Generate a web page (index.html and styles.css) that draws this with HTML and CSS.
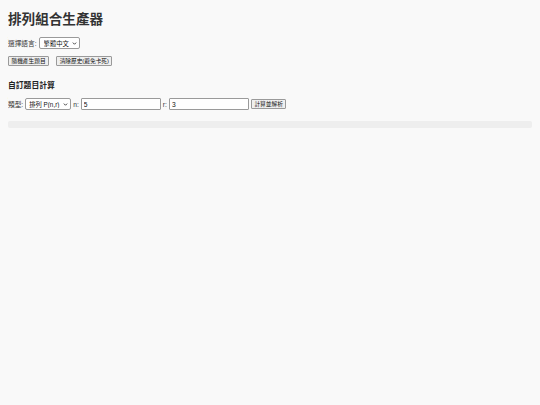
FILE: index.html
```html
<!DOCTYPE html>
<html lang="zh-Hant">
<head>
<meta charset="utf-8">
<title>排列組合生產器</title>
<link rel="stylesheet" href="styles.css">
</head>
<body>
<h1 class="title">排列組合生產器</h1>
<div class="row lang-row">
  <label class="label" for="lang">選擇語言:</label>
  <span class="select-wrap">
    <select id="lang" class="select lang-select">
      <option>繁體中文</option>
      <option>English</option>
    </select>
    <svg class="chev" viewBox="0 0 6 4" width="5" height="3"><path d="M0.8 0.8 L3 3 L5.2 0.8" fill="none" stroke="#222" stroke-width="1.1"/></svg>
  </span>
</div>
<div class="row btn-row">
  <button class="btn">隨機產生題目</button>
  <button class="btn">清除歷史(避免卡死)</button>
</div>
<h3 class="subtitle">自訂題目計算</h3>
<div class="row calc-row">
  <label class="label">類型:</label>
  <span class="select-wrap">
    <select class="select type-select">
      <option>排列 P(n,r)</option>
      <option>組合 C(n,r)</option>
    </select>
    <svg class="chev" viewBox="0 0 6 4" width="5" height="3"><path d="M0.8 0.8 L3 3 L5.2 0.8" fill="none" stroke="#222" stroke-width="1.1"/></svg>
  </span>
  <label class="label">n:</label>
  <input class="num" type="text" value="5">
  <label class="label">r:</label>
  <input class="num" type="text" value="3">
  <button class="btn calc-btn">計算並解析</button>
</div>
<div class="result"></div>
</body>
</html>
```

FILE: styles.css
```css
html {
  background: #f9f9f9;
}
body {
  margin: 8px;
  font-family: "Liberation Sans", "Noto Sans CJK TC", sans-serif;
  color: #333;
  font-size: 6.7px;
}
.title {
  margin: 4px 0 0;
  font-size: 13.6px;
  line-height: 16px;
  font-weight: bold;
  color: #333;
}
.row {
  display: flex;
  align-items: center;
}
.lang-row {
  margin-top: 9px;
  height: 12px;
  gap: 2px;
}
.label {
  font-size: 6.7px;
  color: #333;
}
.select-wrap {
  position: relative;
  display: inline-flex;
}
.select {
  appearance: none;
  -webkit-appearance: none;
  margin: 0;
  height: 12px;
  padding: 0 0 0 4px;
  border: 1px solid #9a9a9a;
  border-radius: 2px;
  background: #fff;
  font-family: "Liberation Sans", "Noto Sans CJK TC", sans-serif;
  font-size: 6.3px;
  color: #111;
}
.lang-select {
  width: 41px;
}
.type-select {
  width: 46px;
  padding-left: 3px;
}
.chev {
  position: absolute;
  right: 3px;
  top: 5px;
}
.btn-row {
  margin-top: 7px;
  height: 10px;
  gap: 7px;
}
.btn {
  margin: 0;
  height: 10px;
  padding: 0 2.5px;
  border: 1px solid #9a9a9a;
  border-radius: 1px;
  background: #efefef;
  font-family: "Liberation Sans", "Noto Sans CJK TC", sans-serif;
  font-size: 5.7px;
  line-height: 8px;
  color: #111;
}
.subtitle {
  margin: 15px 0 0;
  font-size: 7.8px;
  line-height: 10px;
  font-weight: bold;
  color: #222;
}
.calc-row {
  margin-top: 7px;
  height: 12px;
  gap: 2px;
}
.num {
  margin: 0;
  box-sizing: border-box;
  width: 80px;
  height: 12px;
  padding: 0 2px;
  border: 1px solid #9a9a9a;
  border-radius: 1px;
  background: #fff;
  font-family: "Liberation Sans", "Noto Sans CJK TC", sans-serif;
  font-size: 6.7px;
  color: #111;
}
.calc-btn {
  margin-left: 0;
}
.result {
  margin-top: 11px;
  height: 7px;
  background: #eee;
  border-radius: 2px;
}
```
